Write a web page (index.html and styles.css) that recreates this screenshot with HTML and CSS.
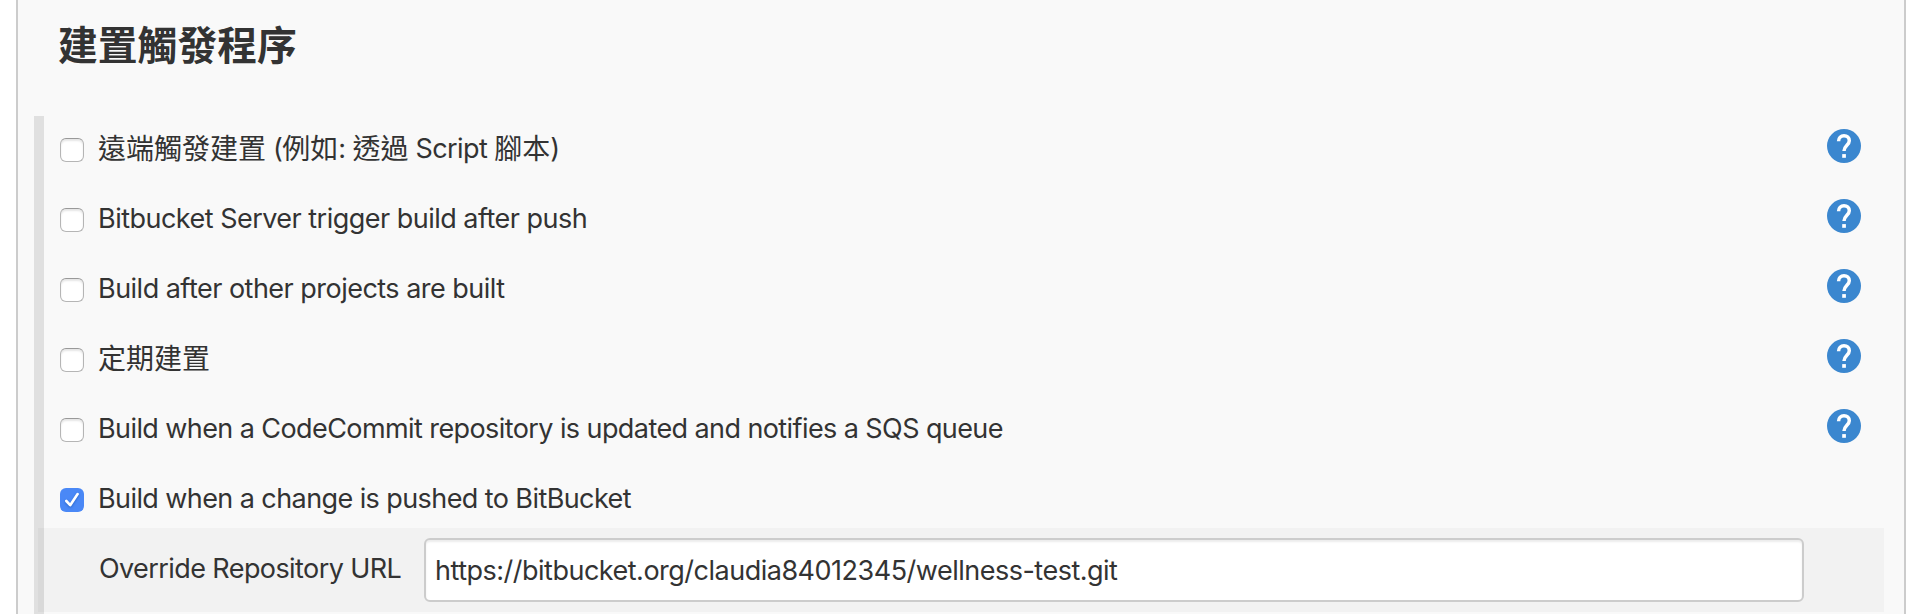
FILE: index.html
```html
<!DOCTYPE html>
<html lang="zh-Hant">
<head>
<meta charset="utf-8">
<title>建置觸發程序</title>
<link rel="stylesheet" href="styles.css">
</head>
<body>
<svg width="0" height="0" class="defs"><defs>
<symbol id="help" viewBox="0 0 34 34"><circle cx="17" cy="17" r="17" fill="#3b87cf"/><path d="M11.6 12.2C11.6 8.7 13.9 6.8 17 6.8s5.3 1.9 5.3 5c0 4.3-5.3 4.7-5.3 10.2" fill="none" stroke="#fff" stroke-width="3.5"/><path d="M15.2 25.1h3.7v3.7h-3.7z" fill="#fff"/></symbol>
</defs></svg>
<main class="panel">
<h1 class="title">建置觸發程序</h1>
<section class="triggers">
<label class="row"><input class="check" type="checkbox"><span class="text"><span class="han">遠端觸發建置</span> (<span class="han">例如</span>: <span class="han">透過</span> Script <span class="han">腳本</span>)</span><svg class="help"><use href="#help"/></svg></label>
<label class="row"><input class="check" type="checkbox"><span class="text text-loose">Bitbucket Server trigger build after push</span><svg class="help"><use href="#help"/></svg></label>
<label class="row"><input class="check" type="checkbox"><span class="text text-loose">Build after other projects are built</span><svg class="help"><use href="#help"/></svg></label>
<label class="row"><input class="check" type="checkbox"><span class="text"><span class="han">定期建置</span></span><svg class="help"><use href="#help"/></svg></label>
<label class="row"><input class="check" type="checkbox"><span class="text">Build when a CodeCommit repository is updated and notifies a SQS queue</span><svg class="help"><use href="#help"/></svg></label>
<label class="row row-last"><span class="check checked"><svg width="24" height="24" viewBox="0 0 24 24"><path d="M6.3 13 10.2 17.2 17.6 6" fill="none" stroke="#fff" stroke-width="2.6" stroke-linecap="round" stroke-linejoin="round"/></svg></span><span class="text">Build when a change is pushed to BitBucket</span></label>
<div class="override"><span class="override-label">Override Repository URL</span><div class="url"><span>https://bitbucket.org/claudia84012345/wellness-test.git</span></div></div>
</section>
</main>
</body>
</html>
```
FILE: styles.css
```css
* { box-sizing: border-box; }
body {
  margin: 0;
  height: 614px;
  overflow: hidden;
  background: #fff;
  color: #333;
  font: 27px/40px Inter, "Noto Sans CJK TC", sans-serif;
  letter-spacing: -.585px;
}
.defs { display: block; height: 0; }
.panel {
  width: 1890px;
  height: 614px;
  margin-left: 16px;
  padding: 13px 20px 0 16px;
  border: solid #ccc;
  border-width: 0 2px;
  background: #f9f9f9;
}
.title {
  height: 103px;
  margin: 0;
  padding-left: 24px;
  font: bold 39.8px/60px "Noto Sans CJK TC", sans-serif;
  letter-spacing: 0;
}
.triggers { height: 498px; border-left: 10px solid #e0e0e0; }
.row { display: flex; height: 70px; padding: 9px 23px 0 16px; }
.row-last { height: 62px; }
.check {
  appearance: none;
  flex: none;
  width: 24px;
  height: 24px;
  margin: 13px 14px 0 0;
  border: 1px solid #b5b5b5;
  border-top-color: #999;
  border-radius: 6px;
  background: #fff;
  box-shadow: inset 0 2px 2px #e6e6e6;
}
.checked { border: 0; background: #4a88f6; box-shadow: none; }
.checked svg { display: block; filter: drop-shadow(0 1px 1px #2563c8); }
.text { flex: 1; padding-top: 4px; white-space: nowrap; }
.text-loose { letter-spacing: -.52px; }
.han { font-size: 28px; line-height: 1; letter-spacing: 0; vertical-align: -1px; }
.help { flex: none; width: 34px; height: 34px; margin-top: 4px; }
.override {
  display: flex;
  height: 84px;
  margin-left: -6px;
  padding: 10px 80px 0 61px;
  background: rgba(0, 0, 0, .027);
}
.override-label { width: 325px; padding-top: 11px; white-space: nowrap; }
.url {
  flex: 1;
  height: 64px;
  padding: 11px 9px 0;
  border: 2px solid #ccc;
  border-radius: 6px;
  background: #fff;
  box-shadow: inset 0 2px 2px #ededed;
  letter-spacing: -.5px;
  white-space: nowrap;
}
```
